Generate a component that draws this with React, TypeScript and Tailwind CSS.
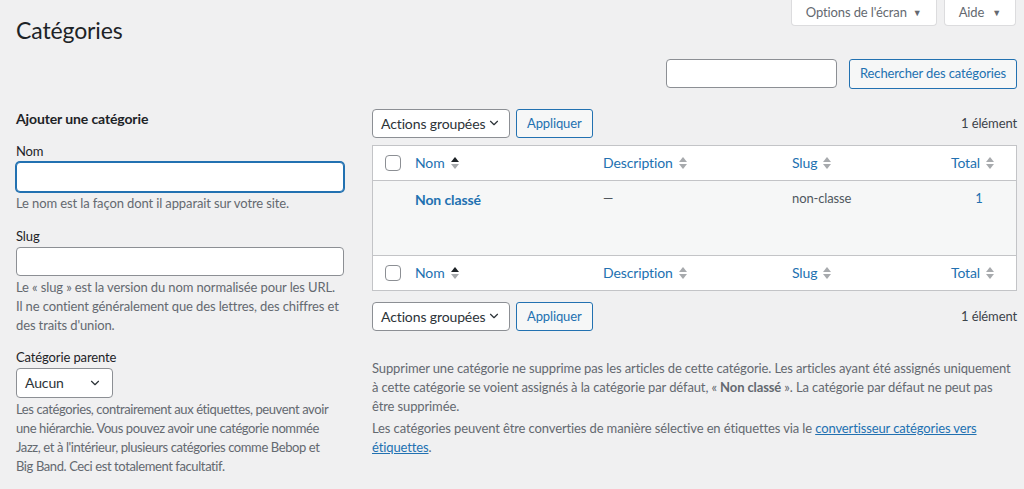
import { ChevronDown } from 'lucide-react';

function SortIcon({ active }: { active?: boolean }) {
  return (
    <svg width="8" height="14" viewBox="0 0 8 14" className="ml-[6px] shrink-0">
      <path d="M0 6 L4 1 L8 6 Z" fill={active ? '#1d2327' : '#a7aaad'} />
      <path d="M0 8 L4 13 L8 8 Z" fill="#a7aaad" />
    </svg>
  );
}

function Checkbox() {
  return <span className="block w-4 h-4 rounded-[4px] border border-[#8c8f94] bg-white" />;
}

function HeadRow({ border }: { border: 'top' | 'bottom' }) {
  return (
    <div
      className={`grid grid-cols-[42px_188px_189px_1fr_90px] h-[35px] items-center bg-white text-[14px] text-[#2271b1] ${
        border === 'bottom' ? 'border-b border-[#c3c4c7]' : 'border-t border-[#c3c4c7]'
      }`}
    >
      <div className="pl-3"><Checkbox /></div>
      <div className="flex items-center">Nom<SortIcon active /></div>
      <div className="flex items-center">Description<SortIcon /></div>
      <div className="flex items-center">Slug<SortIcon /></div>
      <div className="flex items-center justify-end pr-[22px]">Total<SortIcon /></div>
    </div>
  );
}

function BulkActions() {
  return (
    <div className="flex items-center justify-between">
      <div className="flex items-center gap-[6px]">
        <div className="flex items-center justify-between w-[138px] h-[29px] pl-2 pr-2 bg-white border border-[#8c8f94] rounded-[4px] text-[14px] text-[#2c3338] whitespace-nowrap">
          Actions groupées
          <ChevronDown size={14} strokeWidth={2} className="text-[#2c3338]" />
        </div>
        <div className="flex items-center h-[29px] px-[10px] bg-[#f6f7f7] border border-[#2271b1] rounded-[3px] text-[13px] text-[#2271b1]">
          Appliquer
        </div>
      </div>
      <span className="text-[13px] text-[#3c434a]">1 élément</span>
    </div>
  );
}

export default function App() {
  return (
    <div className="min-h-screen bg-[#f0f0f1] font-['Lato',sans-serif] tracking-[-0.12px] text-[13px] text-[#3c434a] pl-4 pr-[7px]">
      <div className="flex items-start justify-between">
        <h1 className="pt-[16px] text-[23px] leading-[1.3] text-[#1d2327]">Catégories</h1>
        <div className="flex gap-[7px] pr-px">
          <div className="flex items-center h-[26px] px-[14px] bg-white border border-t-0 border-[#dcdcde] rounded-b-[4px] text-[13px] text-[#646970]">
            Options de l'écran <span className="ml-[6px] text-[9px]">▼</span>
          </div>
          <div className="flex items-center h-[26px] px-[14px] bg-white border border-t-0 border-[#dcdcde] rounded-b-[4px] text-[13px] text-[#646970]">
            Aide <span className="ml-[8px] text-[9px]">▼</span>
          </div>
        </div>
      </div>

      <div className="flex justify-end items-center gap-3 mt-[13px]">
        <div className="w-[171px] h-[29px] bg-white border border-[#8c8f94] rounded-[4px]" />
        <div className="flex items-center h-[30px] px-[10px] bg-[#f6f7f7] border border-[#2271b1] rounded-[3px] text-[13px] text-[#2271b1]">
          Rechercher des catégories
        </div>
      </div>

      <div className="flex gap-7 mt-[20px]">
        <div className="w-[328px] shrink-0">
          <h2 className="text-[14px] font-bold text-[#1d2327] leading-[20px]">Ajouter une catégorie</h2>

          <div className="mt-[12px] text-[13px] text-[#1d2327] leading-[20px]">Nom</div>
          <div className="mt-px h-[30px] bg-white border border-[#2271b1] shadow-[0_0_0_1px_#2271b1] rounded-[4px]" />
          <p className="mt-[2px] text-[13px] leading-[19px] text-[#646970]">Le nom est la façon dont il apparait sur votre site.</p>

          <div className="mt-[13px] text-[13px] text-[#1d2327] leading-[20px]">Slug</div>
          <div className="mt-px h-[29px] bg-white border border-[#8c8f94] rounded-[4px]" />
          <p className="mt-[2px] text-[13px] leading-[19px] text-[#646970]">
            Le « slug » est la version du nom normalisée pour les URL. Il ne contient généralement que des lettres, des chiffres et des traits d'union.
          </p>

          <div className="mt-[12px] text-[13px] text-[#1d2327] leading-[20px]">Catégorie parente</div>
          <div className="mt-px flex items-center justify-between w-[97px] h-[30px] pl-2 pr-[10px] bg-white border border-[#8c8f94] rounded-[4px] text-[14px] text-[#2c3338]">
            Aucun
            <ChevronDown size={14} strokeWidth={2} />
          </div>
          <p className="mt-[2px] text-[13px] leading-[19px] tracking-[-0.4px] text-[#646970]">
            Les catégories, contrairement aux étiquettes, peuvent avoir une hiérarchie. Vous pouvez avoir une catégorie nommée Jazz, et à l'intérieur, plusieurs catégories comme Bebop et
            <br />
            Big Band. Ceci est totalement facultatif.
          </p>
        </div>

        <div className="flex-1">
          <BulkActions />

          <div className="mt-[7px] border border-[#c3c4c7] bg-white">
            <HeadRow border="bottom" />
            <div className="grid grid-cols-[42px_188px_189px_1fr_90px] h-[74px] bg-[#f6f7f7] pt-[8px] text-[13px]">
              <div />
              <div className="text-[14px] font-bold text-[#2271b1]">Non classé</div>
              <div className="text-[#50575e]">—</div>
              <div className="text-[#50575e]">non-classe</div>
              <div className="text-center pl-4 text-[#2271b1]">1</div>
            </div>
            <HeadRow border="top" />
          </div>

          <div className="mt-[11px]">
            <BulkActions />
          </div>

          <div className="mt-[28px] text-[13px] leading-[19px] text-[#646970]">
            <p>
              Supprimer une catégorie ne supprime pas les articles de cette catégorie. Les articles ayant été assignés uniquement à cette catégorie se voient assignés à la catégorie par défaut, « <strong className="font-bold">Non classé</strong> ». La catégorie par défaut ne peut pas être supprimée.
            </p>
            <p className="mt-[3px]">
              Les catégories peuvent être converties de manière sélective en étiquettes via le{' '}
              <a className="text-[#2271b1] underline">convertisseur catégories vers étiquettes</a>.
            </p>
          </div>
        </div>
      </div>
    </div>
  );
}
